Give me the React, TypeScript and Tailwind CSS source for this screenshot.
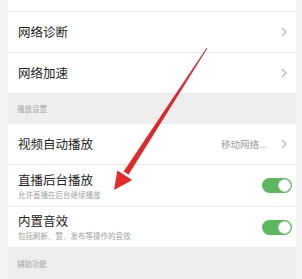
import React from 'react'

const font = { fontFamily: '"Noto Sans CJK SC", "Noto Sans", sans-serif' }

function Chevron() {
  return (
    <svg width="6" height="10" viewBox="0 0 6 10" className="shrink-0">
      <polyline points="1,1 5,5 1,9" fill="none" stroke="#b5b5b5" strokeWidth="1.1" />
    </svg>
  )
}

function Toggle() {
  return (
    <div className="w-[30px] h-[15px] rounded-full bg-[#5cb85c] flex items-center justify-end pr-[1px]">
      <div className="w-[13px] h-[13px] rounded-full bg-white border border-[#d6d6d6]" />
    </div>
  )
}

function NavRow({ label, value, h }: { label: string; value?: string; h: string }) {
  return (
    <div className={`${h} flex items-center justify-between pl-[10px] pr-[9px] border-b border-[#ececec]`}>
      <span className="text-[12.5px] text-[#222]">{label}</span>
      <div className="flex items-center gap-[14px]">
        {value && <span className="text-[9.5px] text-[#9a9a9a]">{value}</span>}
        <Chevron />
      </div>
    </div>
  )
}

function SwitchRow({ label, sub, h }: { label: string; sub: string; h: string }) {
  return (
    <div className={`${h} flex items-center justify-between pl-[10px] pr-[4px] border-b border-[#ececec]`}>
      <div className="flex flex-col">
        <span className="text-[12.5px] leading-[16px] text-[#222]">{label}</span>
        <span className="text-[7.5px] leading-[11px] text-[#a0a0a0] mt-[1px]">{sub}</span>
      </div>
      <Toggle />
    </div>
  )
}

function Section({ title, h }: { title: string; h: string }) {
  return (
    <div className={`${h} bg-[#eeeeee] flex items-center pl-[9px]`}>
      <span className="text-[7.5px] text-[#a5a5a5]">{title}</span>
    </div>
  )
}

export default function App() {
  return (
    <div className="relative w-[302px] h-[279px] overflow-hidden bg-[#f1f1f1] flex" style={font}>
      <div className="w-[8px] shrink-0 bg-[#f3f3f3]" />
      <div className="w-[288px] shrink-0 flex flex-col bg-white">
        <div className="h-[12px] border-b border-[#ececec]" />
        <NavRow label="网络诊断" h="h-[41px]" />
        <NavRow label="网络加速" h="h-[41px]" />
        <Section title="播放设置" h="h-[30px]" />
        <NavRow label="视频自动播放" value="移动网络..." h="h-[41px]" />
        <SwitchRow label="直播后台播放" sub="允许直播在后台继续播放" h="h-[42px]" />
        <SwitchRow label="内置音效" sub="包括刷新、赞、发布等操作的音效" h="h-[41px]" />
        <Section title="辅助功能" h="h-[31px]" />
      </div>
      <div className="flex-1 bg-[#f4f4f4]" />

      <svg className="absolute left-0 top-0 pointer-events-none" width="302" height="279" viewBox="0 0 302 279">
        <defs>
          <linearGradient id="arr" x1="207" y1="48" x2="114" y2="190" gradientUnits="userSpaceOnUse">
            <stop offset="0" stopColor="#b8484a" />
            <stop offset="0.4" stopColor="#d8282b" />
            <stop offset="1" stopColor="#e42a2a" />
          </linearGradient>
        </defs>
        <polygon points="207.5,48.2 206.6,47.7 123.6,171.4 128.6,174.6" fill="url(#arr)" />
        <polygon points="114,190 117.4,170.4 132.2,180" fill="#e22a2a" />
      </svg>
    </div>
  )
}
